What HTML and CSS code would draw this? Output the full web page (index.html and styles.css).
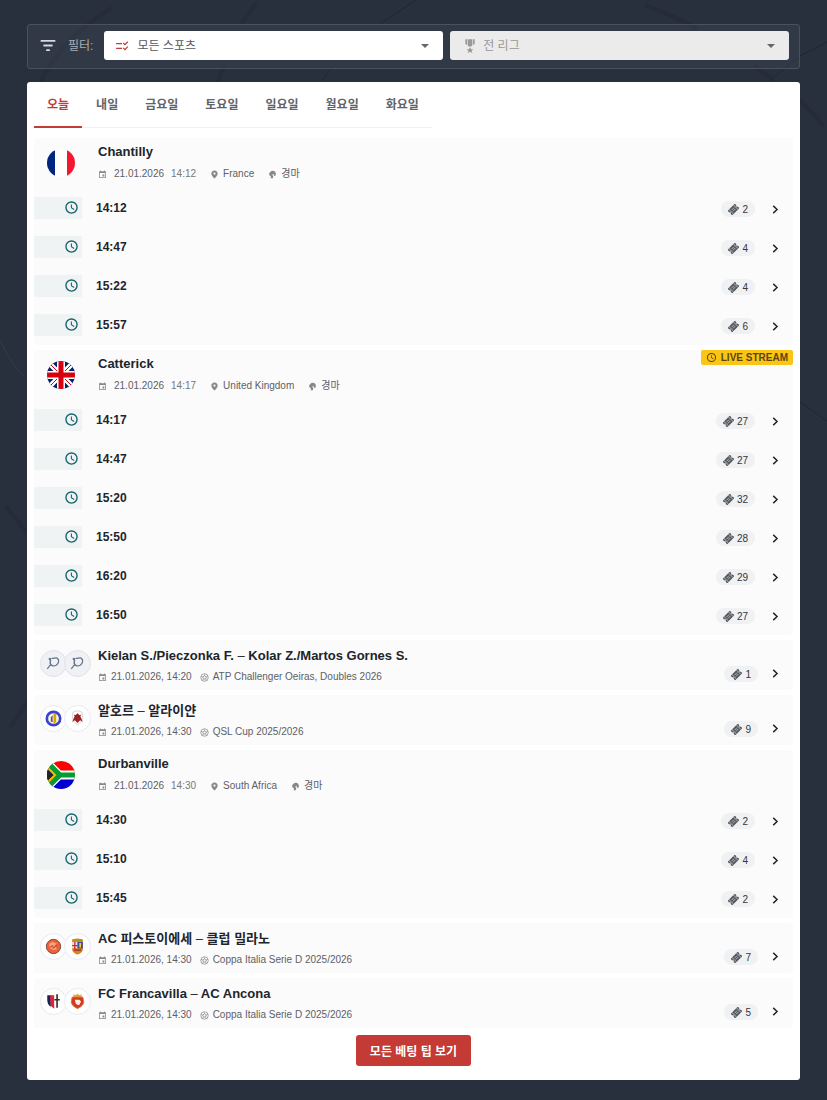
FILE: index.html
```html
<!DOCTYPE html>
<html lang="ko">
<head>
  <meta charset="UTF-8" />
  <meta name="viewport" content="width=device-width, initial-scale=1" />
  <title>베팅 팁</title>
  <link rel="stylesheet" href="styles.css">
</head>
<body>
  <svg class="backdrop" viewBox="0 0 827 1100" preserveAspectRatio="xMidYMin slice" aria-hidden="true">
    <g class="backdrop-soft">
      <path d="M112 8C82 26 58 48 40 82"/>
      <path d="M256 3l-14 20M224 66l-6 16"/>
      <path d="M645 5c20 8 36 14 52 24M754 66l20 14"/>
      <path d="M800 100l24 26M6 506l20 26M10 727l17-24"/>
    </g>
    <g class="backdrop-thin">
      <path d="M416 0l-36 24M333 66l-11 15M827 42l-27 14-30 24"/>
      <path d="M800 402l27 19"/>
    </g>
    <path class="backdrop-light" d="M0 340c6 14 14 27 24 36"/>
  </svg>

  <svg class="sprite" aria-hidden="true">
    <symbol id="i-filter" viewBox="0 0 16 12"><path d="M0 0h16v2H0zM3 5h10v2H3zM6 10h4v2H6z"/></symbol>
    <symbol id="i-checks" viewBox="0 0 24 24"><path d="M2 7h10v2H2zM2 15h10v2H2zM17 11l-3.500-3.500 1.400-1.400 2.100 2.100 4.300-4.200 1.400 1.400zM17 19.500L13.500 16l1.400-1.400 2.100 2.100 4.300-4.200 1.400 1.400z"/></symbol>
    <symbol id="i-medal" viewBox="0 0 24 24"><path d="M5 2h3v9l-3-2zM9 2h6v10l-3 1-3-1zM16 2h3v7l-3 2zM12 14l1.600 3H17l-2.600 2.200 1 3.300-3.400-2-3.400 2 1-3.300L7 17h3.400z"/></symbol>
    <symbol id="i-caret" viewBox="0 0 10 5"><path d="M0 0h10L5 5z"/></symbol>
    <symbol id="i-clock" viewBox="0 0 24 24"><path d="M12 2a10 10 0 1 0 0 20 10 10 0 0 0 0-20zm0 2.200a7.800 7.800 0 1 1 0 15.600 7.800 7.800 0 0 1 0-15.600zM11 7v5.800l4.800 3 .9-1.400-4-2.400V7z"/></symbol>
    <symbol id="i-calendar" viewBox="0 0 24 24"><path d="M17 12h-5v5h5zM16 1v2H8V1H6v2H3v18h18V3h-3V1zm3 18H5V8h14z"/></symbol>
    <symbol id="i-pin" viewBox="0 0 24 24"><path d="M12 1C7 1 3.500 4.800 3.500 9.500 3.500 15.500 12 23 12 23s8.500-7.500 8.500-13.500C20.500 4.800 17 1 12 1zm0 11.500a3 3 0 1 1 0-6 3 3 0 0 1 0 6z"/></symbol>
    <symbol id="i-horse" viewBox="0 0 24 24"><path d="M13 2c5 0 8 4 8 8 0 3-1 5-3 6l-3-2c1-2 0-4-2-4l-1 3 2 5-1 4H7l1-5-4-3c-2-3-1-7 2-9 2-2 4-3 7-3z"/></symbol>
    <symbol id="i-ball" viewBox="0 0 24 24"><g fill="none" stroke="currentColor" stroke-width="2"><circle cx="12" cy="12" r="10"/><path d="M12 7.500l4.500 3.200-1.700 5.300H9.200l-1.700-5.300zM12 7.500V4M16.500 10.700L21 9M14.800 16l3 4M9.200 16l-3 4M7.500 10.700L3 9"/></g></symbol>
    <symbol id="i-ticket" viewBox="0 0 24 24"><g transform="rotate(-45 12 12)"><path d="M1 5h22v5a2 2 0 0 0 0 4v5H1v-5a2 2 0 0 0 0-4z"/><path d="M5 5v14M19 5v14M8 10h8M8 14h8" fill="none" stroke="#eef0f2" stroke-width="1.300"/></g></symbol>
    <symbol id="i-chevron" viewBox="0 0 6 8"><path d="M1 0.800L4.400 4 1 7.200" fill="none" stroke="currentColor" stroke-width="1.300"/></symbol>
    <symbol id="i-racket" viewBox="0 0 28 28"><g fill="none" stroke="#66758a" stroke-width="1.400"><path d="M12 8c2 1 4-1 6 0 3 2 2 6-1 8-2 1-5 1-6-1-1-1-1-3 0-5M11 15l-4 5"/></g><circle cx="10" cy="9" r="1.500" fill="#66758a"/></symbol>
    <symbol id="f-fr" viewBox="0 0 28 28"><path fill="#fff" d="M0 0h28v28H0z"/><path fill="#00267f" d="M0 0h8v28H0z"/><path fill="#f31830" d="M20 0h8v28h-8z"/></symbol>
    <symbol id="f-gb" viewBox="0 0 28 28"><path fill="#012169" d="M0 0h28v28H0z"/><path d="M0 0l28 28M28 0L0 28" stroke="#fff" stroke-width="5"/><path d="M0 0l28 28M28 0L0 28" stroke="#d8000f" stroke-width="1"/><path d="M14 0v28M0 14h28" stroke="#fff" stroke-width="8"/><path d="M14 0v28M0 14h28" stroke="#d8000f" stroke-width="5"/></symbol>
    <symbol id="f-za" viewBox="0 0 28 28"><path fill="#f00" d="M0 0h28v14H0z"/><path fill="#0000d0" d="M0 14h28v14H0z"/><path d="M-2 0l14 14L-2 28M12 14h18" fill="none" stroke="#fff" stroke-width="9"/><path d="M-4 0l14 14L-4 28z"/><path d="M-4 0l14 14L-4 28" fill="none" stroke="#fcb900" stroke-width="5"/><path d="M-1 0l14 14L-1 28M12 14h18" fill="none" stroke="#059b30" stroke-width="5"/><path d="M-4 4L6 14-4 24z"/></symbol>
    <symbol id="c-ahli" viewBox="0 0 28 28"><circle cx="14" cy="14" r="7.500" fill="#fff6cf" stroke="#3941d9" stroke-width="3"/><path fill="#d8a400" d="M14 8l3 1v9l-3 2z"/><path fill="#4d5a8c" d="M11 13l2-3v8h-2z"/></symbol>
    <symbol id="c-rayyan" viewBox="0 0 28 28"><path d="M9 7c3-2 7-2 10 0 2 5 0 11-5 14C9 18 7 12 9 7z" fill="#fff" stroke="#bbb" stroke-width=".7"/><path fill="#a81e20" d="M14 8l3 3 3 7-3-2-3 3-3-3-3 2 3-7z"/><path d="M10 10l3 2M18 10l-3 2" stroke="#333"/></symbol>
    <symbol id="c-pistoiese" viewBox="0 0 28 28"><circle cx="14" cy="14" r="8" fill="#ef6238" stroke="#66413c"/><path d="M9 11l4-2 5 2-3 2 3 4-4 1-4-2z" fill="#f8a27d"/><path d="M10 15l3-2 1 3 4-4" fill="none" stroke="#b52d1f"/></symbol>
    <symbol id="c-milano" viewBox="0 0 28 28"><path fill="#c78920" d="M8 6l6-1 6 1v11c0 3-3 5-6 6-3-1-6-3-6-6z"/><path fill="#e9e5ed" d="M8 9h6v7H8z"/><path fill="#3551a0" d="M14 9h6v7h-6z"/><path d="M11 9v8M8 13h6" stroke="#cf2630" stroke-width="1.500"/><path d="M10 18h8" stroke="#bd3822" stroke-width="2"/><path fill="#f1cb46" d="M16 10h2v5h-2z"/></symbol>
    <symbol id="c-francavilla" viewBox="0 0 28 28"><path fill="#172453" d="M7 7h4v13c-3-2-4-5-4-8z"/><path fill="#dc243d" d="M10 7h5v15l-4-3z"/><path fill="#fff" d="M15 7h6v6c0 3-2 5-6 7z"/><path d="M18 6v15M15 12h6" stroke="#332b28" stroke-width="1.800"/></symbol>
    <symbol id="c-ancona" viewBox="0 0 28 28"><path fill="#dfa63a" d="M10 9l-1-3 3 1 2-2 2 2 3-1-1 3z"/><path fill="#d6372c" stroke="#d38228" d="M8 9h12l1 5c0 4-3 6-7 8-4-2-7-4-7-8z"/><path fill="#fff0d6" d="M11 12h5l2 2-2 4h-2l-2-2z"/></symbol>
  </svg>

  <div class="page">
    <form class="filter">
      <svg class="filter-icon"><use href="#i-filter"/></svg>
      <span class="filter-label">필터:</span>
      <div class="select">
        <select id="sport" aria-label="스포츠"><option>모든 스포츠</option></select>
        <svg class="select-icon red"><use href="#i-checks"/></svg>
        <svg class="select-caret"><use href="#i-caret"/></svg>
      </div>
      <div class="select disabled">
        <select id="league" aria-label="리그" disabled><option>전 리그</option></select>
        <svg class="select-icon"><use href="#i-medal"/></svg>
        <svg class="select-caret"><use href="#i-caret"/></svg>
      </div>
    </form>

    <main class="panel">
      <nav class="tabs">
        <button type="button" class="tab active">오늘</button>
        <button type="button" class="tab">내일</button>
        <button type="button" class="tab">금요일</button>
        <button type="button" class="tab">토요일</button>
        <button type="button" class="tab">일요일</button>
        <button type="button" class="tab">월요일</button>
        <button type="button" class="tab">화요일</button>
      </nav>

      <div class="cards">
        <section class="card">
          <header class="meeting">
            <svg class="flag"><use href="#f-fr"/></svg>
            <div>
              <h2 class="title">Chantilly</h2>
              <p class="meta">
                <svg><use href="#i-calendar"/></svg><span class="date">21.01.2026</span><time>14:12</time>
                <svg class="next"><use href="#i-pin"/></svg><span>France</span>
                <svg class="next"><use href="#i-horse"/></svg><span class="sport">경마</span>
              </p>
            </div>
          </header>
          <a class="race" href="#"><span class="clock"><svg><use href="#i-clock"/></svg></span><b>14:12</b><span class="count"><svg><use href="#i-ticket"/></svg>2</span><svg class="chevron"><use href="#i-chevron"/></svg></a>
          <a class="race" href="#"><span class="clock"><svg><use href="#i-clock"/></svg></span><b>14:47</b><span class="count"><svg><use href="#i-ticket"/></svg>4</span><svg class="chevron"><use href="#i-chevron"/></svg></a>
          <a class="race" href="#"><span class="clock"><svg><use href="#i-clock"/></svg></span><b>15:22</b><span class="count"><svg><use href="#i-ticket"/></svg>4</span><svg class="chevron"><use href="#i-chevron"/></svg></a>
          <a class="race" href="#"><span class="clock"><svg><use href="#i-clock"/></svg></span><b>15:57</b><span class="count"><svg><use href="#i-ticket"/></svg>6</span><svg class="chevron"><use href="#i-chevron"/></svg></a>
        </section>

        <section class="card">
          <span class="live"><svg><use href="#i-clock"/></svg>LIVE STREAM</span>
          <header class="meeting">
            <svg class="flag"><use href="#f-gb"/></svg>
            <div>
              <h2 class="title">Catterick</h2>
              <p class="meta">
                <svg><use href="#i-calendar"/></svg><span class="date">21.01.2026</span><time>14:17</time>
                <svg class="next"><use href="#i-pin"/></svg><span>United Kingdom</span>
                <svg class="next"><use href="#i-horse"/></svg><span class="sport">경마</span>
              </p>
            </div>
          </header>
          <a class="race" href="#"><span class="clock"><svg><use href="#i-clock"/></svg></span><b>14:17</b><span class="count"><svg><use href="#i-ticket"/></svg>27</span><svg class="chevron"><use href="#i-chevron"/></svg></a>
          <a class="race" href="#"><span class="clock"><svg><use href="#i-clock"/></svg></span><b>14:47</b><span class="count"><svg><use href="#i-ticket"/></svg>27</span><svg class="chevron"><use href="#i-chevron"/></svg></a>
          <a class="race" href="#"><span class="clock"><svg><use href="#i-clock"/></svg></span><b>15:20</b><span class="count"><svg><use href="#i-ticket"/></svg>32</span><svg class="chevron"><use href="#i-chevron"/></svg></a>
          <a class="race" href="#"><span class="clock"><svg><use href="#i-clock"/></svg></span><b>15:50</b><span class="count"><svg><use href="#i-ticket"/></svg>28</span><svg class="chevron"><use href="#i-chevron"/></svg></a>
          <a class="race" href="#"><span class="clock"><svg><use href="#i-clock"/></svg></span><b>16:20</b><span class="count"><svg><use href="#i-ticket"/></svg>29</span><svg class="chevron"><use href="#i-chevron"/></svg></a>
          <a class="race" href="#"><span class="clock"><svg><use href="#i-clock"/></svg></span><b>16:50</b><span class="count"><svg><use href="#i-ticket"/></svg>27</span><svg class="chevron"><use href="#i-chevron"/></svg></a>
        </section>

        <a class="card match" href="#">
          <span class="teams tennis"><svg><use href="#i-racket"/></svg><svg><use href="#i-racket"/></svg></span>
          <div class="match-info">
            <h2 class="title">Kielan S./Pieczonka F. <i>–</i> Kolar Z./Martos Gornes S.</h2>
            <p class="meta"><svg><use href="#i-calendar"/></svg><span>21.01.2026, 14:20</span><svg class="next"><use href="#i-ball"/></svg><span>ATP Challenger Oeiras, Doubles 2026</span></p>
          </div>
          <span class="count"><svg><use href="#i-ticket"/></svg>1</span><svg class="chevron"><use href="#i-chevron"/></svg>
        </a>

        <a class="card match" href="#">
          <span class="teams"><svg><use href="#c-ahli"/></svg><svg><use href="#c-rayyan"/></svg></span>
          <div class="match-info">
            <h2 class="title">알호르 <i>–</i> 알라이얀</h2>
            <p class="meta"><svg><use href="#i-calendar"/></svg><span>21.01.2026, 14:30</span><svg class="next"><use href="#i-ball"/></svg><span>QSL Cup 2025/2026</span></p>
          </div>
          <span class="count"><svg><use href="#i-ticket"/></svg>9</span><svg class="chevron"><use href="#i-chevron"/></svg>
        </a>

        <section class="card">
          <header class="meeting">
            <svg class="flag"><use href="#f-za"/></svg>
            <div>
              <h2 class="title">Durbanville</h2>
              <p class="meta">
                <svg><use href="#i-calendar"/></svg><span class="date">21.01.2026</span><time>14:30</time>
                <svg class="next"><use href="#i-pin"/></svg><span>South Africa</span>
                <svg class="next"><use href="#i-horse"/></svg><span class="sport">경마</span>
              </p>
            </div>
          </header>
          <a class="race" href="#"><span class="clock"><svg><use href="#i-clock"/></svg></span><b>14:30</b><span class="count"><svg><use href="#i-ticket"/></svg>2</span><svg class="chevron"><use href="#i-chevron"/></svg></a>
          <a class="race" href="#"><span class="clock"><svg><use href="#i-clock"/></svg></span><b>15:10</b><span class="count"><svg><use href="#i-ticket"/></svg>4</span><svg class="chevron"><use href="#i-chevron"/></svg></a>
          <a class="race" href="#"><span class="clock"><svg><use href="#i-clock"/></svg></span><b>15:45</b><span class="count"><svg><use href="#i-ticket"/></svg>2</span><svg class="chevron"><use href="#i-chevron"/></svg></a>
        </section>

        <a class="card match" href="#">
          <span class="teams"><svg><use href="#c-pistoiese"/></svg><svg><use href="#c-milano"/></svg></span>
          <div class="match-info">
            <h2 class="title">AC 피스토이에세 <i>–</i> 클럽 밀라노</h2>
            <p class="meta"><svg><use href="#i-calendar"/></svg><span>21.01.2026, 14:30</span><svg class="next"><use href="#i-ball"/></svg><span>Coppa Italia Serie D 2025/2026</span></p>
          </div>
          <span class="count"><svg><use href="#i-ticket"/></svg>7</span><svg class="chevron"><use href="#i-chevron"/></svg>
        </a>

        <a class="card match" href="#">
          <span class="teams"><svg><use href="#c-francavilla"/></svg><svg><use href="#c-ancona"/></svg></span>
          <div class="match-info">
            <h2 class="title">FC Francavilla <i>–</i> AC Ancona</h2>
            <p class="meta"><svg><use href="#i-calendar"/></svg><span>21.01.2026, 14:30</span><svg class="next"><use href="#i-ball"/></svg><span>Coppa Italia Serie D 2025/2026</span></p>
          </div>
          <span class="count"><svg><use href="#i-ticket"/></svg>5</span><svg class="chevron"><use href="#i-chevron"/></svg>
        </a>
      </div>

      <button type="button" class="more">모든 베팅 팁 보기</button>
    </main>
  </div>
</body>
</html>
```
FILE: styles.css
```css
:root {
  --bg: #282f3d;
  --red: #c43a35;
  --text: #20242c;
  --muted: #5d6066;
  --card: #fbfbfb;
}

* {
  box-sizing: border-box;
  margin: 0;
  padding: 0;
}

body {
  font-family: 'Liberation Sans', 'Noto Sans CJK KR', sans-serif;
  font-size: 12px;
  color: var(--text);
  background: var(--bg);
}

svg {
  display: block;
  flex: none;
  fill: currentColor;
}

a {
  color: inherit;
  text-decoration: none;
}

button, select {
  font: inherit;
  border: none;
}

button {
  cursor: pointer;
}

.sprite {
  width: 0;
  height: 0;
  position: absolute;
}

/* Faint lines behind the page */
.backdrop {
  position: absolute;
  top: 0;
  left: 0;
  width: 100%;
  height: 100%;
  z-index: -1;
  fill: none;
}

.backdrop-soft {
  stroke: #252b39;
  stroke-width: 4;
}

.backdrop-thin {
  stroke: #202634;
  stroke-width: 1;
}

.backdrop-light {
  stroke: #363d4a;
}

.page {
  padding: 24px 27px 20px;
}

/* Filter bar */
.filter {
  display: flex;
  align-items: center;
  gap: 7px;
  padding: 6px 10px 8px 12px;
  margin-bottom: 13px;
  border: 1px solid #4b525f;
  border-radius: 3px;
  background: rgba(255, 255, 255, 0.05);
}

.filter-icon {
  width: 16px;
  height: 11px;
  color: #d5d9df;
}

.filter-label {
  margin: 0 4px 2px 5px;
  color: #a9adb5;
}

.select {
  display: grid;
  flex: 1;
  grid-template-columns: 36px 1fr 36px;
  align-items: center;
  justify-items: center;
  height: 29px;
  border-radius: 3px;
  background: #fff;
  color: #55585e;
}

.select select {
  grid-area: 1 / 1 / 2 / 4;
  width: 100%;
  height: 100%;
  padding: 0 36px 0 33px;
  appearance: none;
  background: transparent;
  color: inherit;
  opacity: 1;
}

.select-icon {
  grid-area: 1 / 1 / 2 / 2;
  width: 14px;
  height: 14px;
  pointer-events: none;
}

.select-icon.red {
  color: var(--red);
}

.select-caret {
  grid-area: 1 / 3 / 2 / 4;
  width: 8px;
  height: 4px;
  color: #666;
  pointer-events: none;
}

.select.disabled {
  background: #ebebeb;
  color: #999;
}

.select.disabled .select-icon {
  width: 16px;
  height: 16px;
  margin-left: 4px;
}

/* Panel and tabs */
.panel {
  display: flex;
  flex-direction: column;
  align-items: center;
  padding: 0 7px 14px;
  border-radius: 3px;
  background: #fff;
}

.tabs {
  display: flex;
  align-self: flex-start;
  gap: 1px;
  border-bottom: 1px solid #f1f1f1;
}

.tab {
  height: 46px;
  padding: 0 13px 2px;
  margin-bottom: -1px;
  border-bottom: 2px solid transparent;
  background: none;
  color: #606369;
  font-weight: 700;
}

.tab.active {
  border-color: var(--red);
  color: var(--red);
}

.cards {
  display: flex;
  flex-direction: column;
  gap: 5px;
  width: 100%;
  margin: 10px 0 7px;
}

.card {
  position: relative;
  border-radius: 3px;
  background: var(--card);
}

section.card {
  padding-bottom: 1px;
}

.title {
  font-size: 13px;
  line-height: 20px;
}

.title i {
  font-style: normal;
  font-weight: 400;
}

.meta {
  display: flex;
  align-items: center;
  gap: 4px;
  margin-top: 3px;
  font-size: 10px;
  line-height: 18px;
  color: var(--muted);
}

.meta svg {
  width: 9px;
  height: 9px;
  color: #888;
}

/* Race meeting */
.meeting {
  display: flex;
  gap: 23px;
  height: 50px;
  padding: 4px 0 0 13px;
}

.flag {
  width: 28px;
  height: 28px;
  margin-top: 7px;
  border-radius: 50%;
}

.meeting .date {
  margin: 0 3px;
}

.meeting time {
  color: #777;
}

.meeting .next {
  margin-left: 10px;
}

.race {
  display: flex;
  align-items: center;
  height: 39px;
  padding-right: 14px;
}

.race b {
  flex: 1;
  margin-left: 14px;
}

.clock {
  display: flex;
  justify-content: flex-end;
  align-items: center;
  width: 48px;
  height: 22px;
  padding-right: 3px;
  background: #eff3f4;
  color: #17636d;
}

.clock svg {
  width: 15px;
  height: 15px;
}

.count {
  display: flex;
  align-items: center;
  gap: 3px;
  height: 16px;
  padding: 0 7px;
  margin: 3px 17px 0 0;
  border-radius: 8px;
  background: #f0f1f2;
  color: #33363c;
  font-size: 10px;
}

.count svg {
  width: 11px;
  height: 11px;
  color: #55585e;
}

.chevron {
  width: 7px;
  height: 9px;
  margin-top: 3px;
}

/* Single match */
.match {
  display: flex;
  align-items: flex-start;
  height: 50px;
  padding: 6px 14px 0 6px;
}

.teams {
  display: flex;
  margin-top: 4px;
}

.teams svg {
  width: 27px;
  height: 27px;
  border: 1px solid #e8eaee;
  border-radius: 50%;
  background: #fff;
}

.teams svg + svg {
  margin-left: -3px;
}

.tennis svg {
  border-color: #dfe2e7;
  background: #f0f1f4;
}

.match-info {
  flex: 1;
  min-width: 0;
  margin-left: 7px;
}

.match .meta {
  margin-top: 2px;
}

.match .next {
  margin-left: 4px;
}

.match .count {
  margin: 20px 14px 0 0;
}

.match .chevron {
  margin-top: 23px;
}

.live {
  position: absolute;
  top: 0;
  right: 0;
  display: flex;
  align-items: center;
  gap: 4px;
  height: 15px;
  padding: 0 5px;
  border-radius: 2px;
  background: #fac515;
  color: #5a4510;
  font-size: 10px;
  font-weight: 700;
}

.live svg {
  width: 11px;
  height: 11px;
}

.more {
  height: 31px;
  padding: 0 14px;
  border-radius: 3px;
  background: var(--red);
  color: #fff;
  font-weight: 700;
}
```
